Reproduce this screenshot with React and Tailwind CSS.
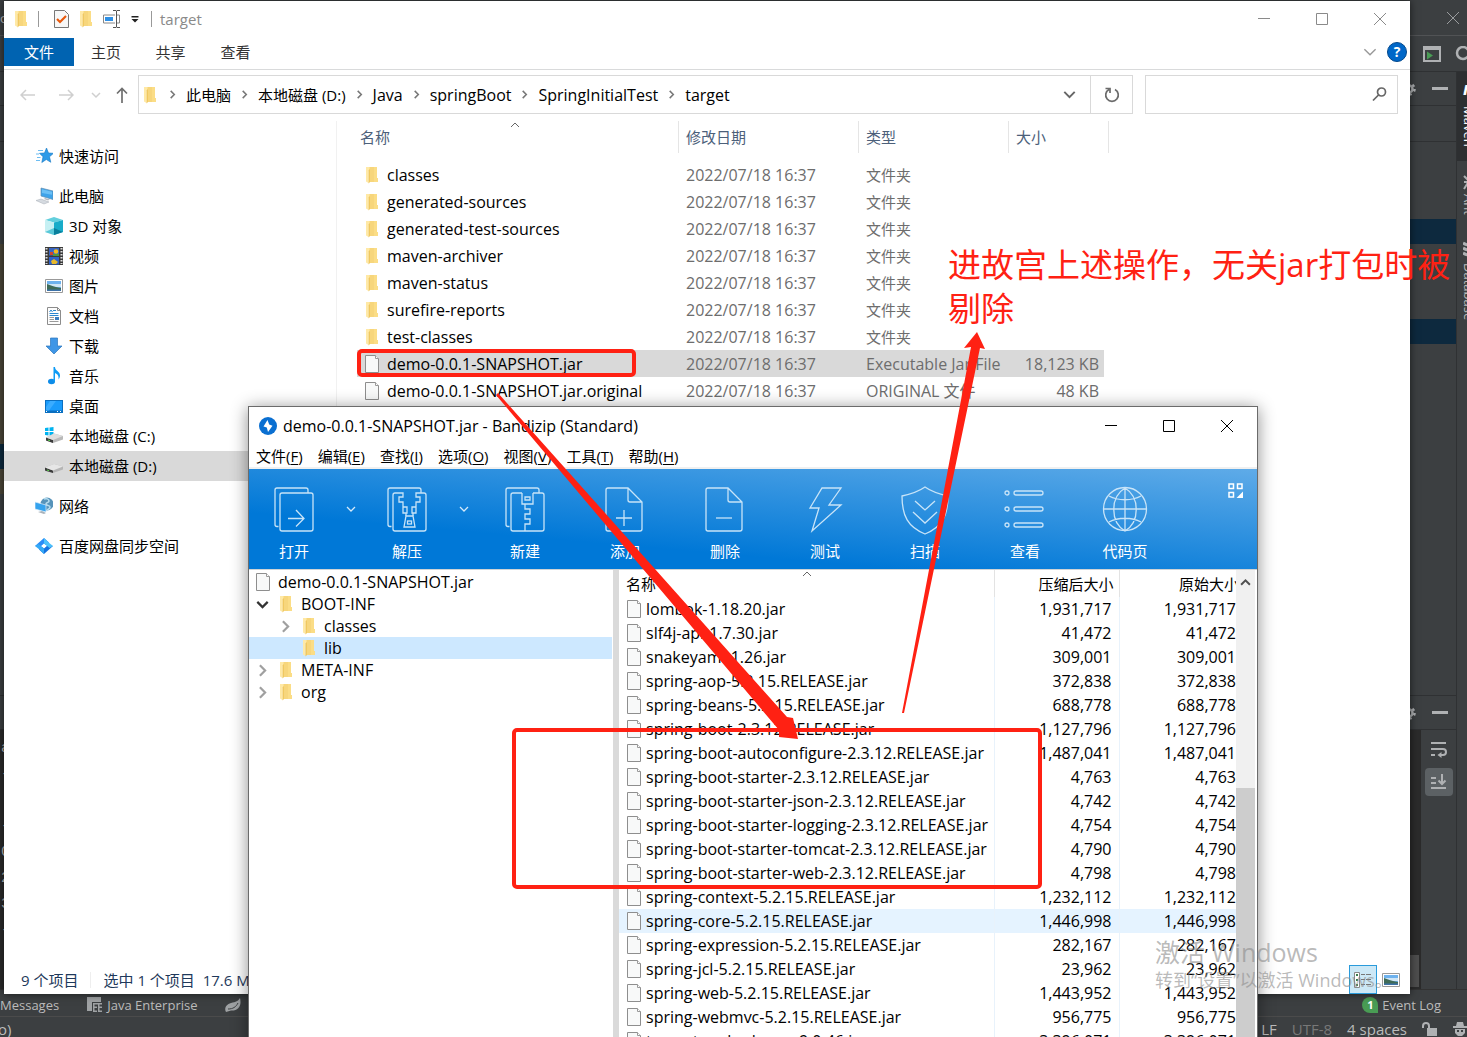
import { useState } from "react"

const places = [
    {name:'快速访问',icon:'star',level:0},
    {name:'此电脑',icon:'pc',level:0,gap:true},
    {name:'3D 对象',icon:'cube',level:1},
    {name:'视频',icon:'video',level:1},
    {name:'图片',icon:'picture',level:1},
    {name:'文档',icon:'doc',level:1},
    {name:'下载',icon:'download',level:1},
    {name:'音乐',icon:'music',level:1},
    {name:'桌面',icon:'desktop',level:1},
    {name:'本地磁盘 (C:)',icon:'diskc',level:1},
    {name:'本地磁盘 (D:)',icon:'disk',level:1},
    {name:'网络',icon:'network',level:0,gap:true},
    {name:'百度网盘同步空间',icon:'baidu',level:0,gap:true},
]

const crumbs = ['此电脑','本地磁盘 (D:)','Java','springBoot','SpringInitialTest','target']

const files = [
    {name:'classes',type:'文件夹'},
    {name:'generated-sources',type:'文件夹'},
    {name:'generated-test-sources',type:'文件夹'},
    {name:'maven-archiver',type:'文件夹'},
    {name:'maven-status',type:'文件夹'},
    {name:'surefire-reports',type:'文件夹'},
    {name:'test-classes',type:'文件夹'},
    {name:'demo-0.0.1-SNAPSHOT.jar',type:'Executable Jar File',size:'18,123 KB'},
    {name:'demo-0.0.1-SNAPSHOT.jar.original',type:'ORIGINAL 文件',size:'48 KB'},
]

const menus = [['文件','F'],['编辑','E'],['查找','I'],['选项','O'],['视图','V'],['工具','T'],['帮助','H']]

const tools = [
    {name:'打开',icon:'open',more:true},
    {name:'解压',icon:'extract',more:true},
    {name:'新建',icon:'create'},
    {name:'添加',icon:'add'},
    {name:'删除',icon:'remove'},
    {name:'测试',icon:'test'},
    {name:'扫描',icon:'scan'},
    {name:'查看',icon:'view'},
    {name:'代码页',icon:'globe'},
]

const jars = [
    ['lombok-1.18.20.jar','1,931,717'],
    ['slf4j-api-1.7.30.jar','41,472'],
    ['snakeyaml-1.26.jar','309,001'],
    ['spring-aop-5.2.15.RELEASE.jar','372,838'],
    ['spring-beans-5.2.15.RELEASE.jar','688,778'],
    ['spring-boot-2.3.12.RELEASE.jar','1,127,796'],
    ['spring-boot-autoconfigure-2.3.12.RELEASE.jar','1,487,041'],
    ['spring-boot-starter-2.3.12.RELEASE.jar','4,763'],
    ['spring-boot-starter-json-2.3.12.RELEASE.jar','4,742'],
    ['spring-boot-starter-logging-2.3.12.RELEASE.jar','4,754'],
    ['spring-boot-starter-tomcat-2.3.12.RELEASE.jar','4,790'],
    ['spring-boot-starter-web-2.3.12.RELEASE.jar','4,798'],
    ['spring-context-5.2.15.RELEASE.jar','1,232,112'],
    ['spring-core-5.2.15.RELEASE.jar','1,446,998'],
    ['spring-expression-5.2.15.RELEASE.jar','282,167'],
    ['spring-jcl-5.2.15.RELEASE.jar','23,962'],
    ['spring-web-5.2.15.RELEASE.jar','1,443,952'],
    ['spring-webmvc-5.2.15.RELEASE.jar','956,775'],
    ['tomcat-embed-core-9.0.46.jar','3,396,071'],
]

function Folder(){
    return(
        <svg width="14" height="18" viewBox="0 0 14 18" className="shrink-0">
            <path d="M4 1h8v11h1v4H4z" fill="#f7d67c"/>
            <path d="M9 1h3v11h1v4H9z" fill="#fbdd86"/>
            <path d="M1 1h3.5v2.5l-1 1V17L1 15.500z" fill="#ffe9a6"/>
            <path d="M3.500 4.500L5 3v13l-1.500 1.500z" fill="#f0c860"/>
        </svg>
    )
}

function Paper(){
    return(
        <svg width="14" height="18" viewBox="0 0 14 18" className="shrink-0">
            <path d="M.5.5h10l3 3v14H.5z" fill="#f8f9f9" stroke="#8e8e8e"/>
            <path d="M10.500.5v3h3" fill="#fff" stroke="#9a9a9a"/>
        </svg>
    )
}

function Chevron({dir='down',size=10,width=1.500}){
    const paths = {
        down:'M1 3l4 4 4-4',
        up:'M1 7l4-4 4 4',
        right:'M3 1l4 4-4 4',
    }
    return(
        <svg width={size} height={size} viewBox="0 0 10 10" fill="none" stroke="currentColor" strokeWidth={width} className="shrink-0">
            <path d={paths[dir]}/>
        </svg>
    )
}

function PlaceIcon({name}){
    const shapes = {
        star:<>
            <path d="M11.500 1l2 5 5 .3-4 3.500 1.300 5.500-4.500-2.800-4.500 3 1.200-5.700-3.500-3.500 5-.3z" fill="#2e9be8" stroke="#1577c2" strokeWidth=".6"/>
            <path d="M3 3.500h5M1 7h3M2 10.500h3.500M1 13.500h4" stroke="#6dbdf2" strokeWidth="1"/>
        </>,
        pc:<>
            <path d="M6 1l12 3v8.500L6 9z" fill="#3ea3ea" stroke="#5f8db0" strokeWidth=".7"/>
            <path d="M7 2.300l10 2.500v3L7 6z" fill="#6cc0f5"/>
            <path d="M1 13.500l5-1.500 8 3-5 2z" fill="#d5dae0" stroke="#a7adb5" strokeWidth=".5"/>
            <path d="M10 11l5 1.500-2 1-4-1.500z" fill="#b2b8c0"/>
        </>,
        cube:<>
            <path d="M0 3l9-3 9 3-9 2.500z" fill="#63cfdd"/>
            <path d="M0 3l9 2.500V18l-9-3z" fill="#c6f0f3"/>
            <path d="M9 5.500L18 3v12l-9 3z" fill="#18acc9"/>
            <path d="M0 15l9-4v7z" fill="#5ac8d8"/>
            <path d="M9 11l9 4-9 3z" fill="#0a7f9c"/>
        </>,
        video:<>
            <path d="M0 0h18v18H0z" fill="#3a3a3a"/>
            <path d="M1.500 1v16M16.500 1v16" stroke="#ddd" strokeWidth="2" strokeDasharray="1.500 1.500"/>
            <path d="M4 1h10v7.500H4z" fill="#3a66c4"/>
            <path d="M4 10h10v7.500H4z" fill="#2f62c9"/>
            <path d="M5 5h3v3H5z" fill="#d2452c"/>
            <circle cx="11" cy="4.500" r="2.300" fill="#f2b91d"/>
            <path d="M8 7h6v2H8z" fill="#4d9b3d"/>
            <path d="M6 14l3-2 4 3-2 2H7z" fill="#e7b92c"/>
        </>,
        picture:<>
            <path d="M.5 2.500h17v13H.5z" fill="#fff" stroke="#999"/>
            <path d="M2 4h14v10H2z" fill="#6eb2ee"/>
            <path d="M2 7h14v3H2z" fill="#cfe6f7"/>
            <path d="M2 7c4 1 6 3 14 4v3H2z" fill="#3f6b58"/>
            <path d="M2 12.500h14V14H2z" fill="#3d72a8"/>
        </>,
        doc:<>
            <path d="M2.500.5h10l3 3v14h-13z" fill="#fdfdfd" stroke="#8c8c8c"/>
            <path d="M12.500.5v3h3" fill="none" stroke="#8c8c8c"/>
            <path d="M4.500 5l1.500-2 1.500 2M8 3.500h3M4.500 6.500h9M4.500 8.500h9" stroke="#2b86d0" fill="none"/>
            <path d="M4.500 10.500H9M4.500 12.500H9M4.500 14.500h9" stroke="#9a9a9a"/>
            <path d="M10 10h4v3h-4z" fill="#3a7cc0"/>
        </>,
        download:<path d="M5.500 1h7v8H17l-8 8-8-8h4.500z" fill="#3f96e6" stroke="#2a76bd" strokeWidth=".7"/>,
        music:<>
            <ellipse cx="6.500" cy="14.500" rx="3.500" ry="2.800" fill="#0e8ce8"/>
            <path d="M8.500 0H10c0 4 5 4 5 8.500 0 1.500-.5 2.500-1.500 4 .5-4-1-5.500-3.500-6.500v8.500H8.500z" fill="#0e9bf5"/>
        </>,
        desktop:<>
            <path d="M0 3h18v13H0z" fill="#0b6fc0"/>
            <path d="M1 4h16v9.500H1z" fill="#1a9bfb"/>
            <path d="M5 4h6L4 13.500H1V10z" fill="#3aacff"/>
            <path d="M1 14.500h1M12 14.500h1M15 14.500h1" stroke="#fff"/>
        </>,
        diskc:<>
            <path d="M0 1l3.500-.5v3.500H0zM4.500.5L8.500 0v4h-4zM0 5h3.500v3.500L0 8zM4.500 5h4v4l-4-.5z" fill="#00b3f0"/>
            <path d="M1 10.500l8-4 9 2.500v3.500L8 16l-7-2.500z" fill="#b9b9b9"/>
            <path d="M1 10.500l7 2.500v3l-7-2.500z" fill="#3c3c3c"/>
            <path d="M4 9l5-2.500 9 2.500-10 4-7-2.500z" fill="#dedede"/>
            <path d="M3 13l2 .7" stroke="#59d04c"/>
        </>,
        disk:<>
            <path d="M0 10.500l9-3.500 9 2.500v3L8 16l-8-2z" fill="#b5b5b5"/>
            <path d="M0 10.500l8 3v2.500l-8-2.500z" fill="#3c3c3c"/>
            <path d="M0 10.500L9 7l9 2.500-10 4z" fill="#e6e6e6"/>
            <path d="M2 13l2 .7" stroke="#59d04c"/>
        </>,
        network:<>
            <circle cx="12" cy="7" r="6.500" fill="#5693ba"/>
            <path d="M9 2c2-1 5 0 5 2s-3 1-3 3 4 1 4 3-2 2-3 3" stroke="#b6dcee" strokeWidth="1.600" fill="none"/>
            <path d="M0 5l11 3v7L0 12z" fill="#35a3ee" stroke="#dfeefa" strokeWidth=".7"/>
            <path d="M3 15l6 2 2-1-4-2z" fill="#a8b2ba"/>
        </>,
        baidu:<>
            <path d="M9 1l5 4.500-2.500 3L9 6.500 5 10 0 9z" fill="#2b8cf7"/>
            <path d="M9 17l-5-4.500 2.500-3L9 11.500 13 8l5 1z" fill="#1573e0"/>
            <path d="M9 1l4 4 5 4-3.500 2L9 6.500z" fill="#4cc1fb"/>
            <path d="M9 17l-4-4L0 9l3.500-2L9 11.500z" fill="#35a9f6"/>
        </>,
    }
    return <svg width="18" height="18" viewBox="0 0 18 18" fill="none" className="shrink-0">{shapes[name]}</svg>
}

function ToolIcon({name}){
    const back = <path d="M6.500 39.500H5a2 2 0 0 1-2-2V3a2 2 0 0 1 2-2h29a2 2 0 0 1 2 2v3"/>
    const page = <path d="M5 1h20l14 14v27a2 2 0 0 1-2 2H5a2 2 0 0 1-2-2V3a2 2 0 0 1 2-2zM25 1v12a2 2 0 0 0 2 2h12"/>
    const shapes = {
        open:<>
            {back}
            <rect x="8" y="6" width="33" height="38" rx="2"/>
            <path d="M16 31.500h16M24 23l8 8.500-8 8"/>
        </>,
        extract:<>
            {back}
            <path d="M14 6h-4a2 2 0 0 0-2 2v34a2 2 0 0 0 2 2h29a2 2 0 0 0 2-2V8a2 2 0 0 0-2-2h-4"/>
            <path d="M14 6h4v4h-4v5h4v5h4v6h-4M35 6h-4v4h4v5h-4v5h-4v6h4M18 20v6h3v3M31 20v6h-3v3"/>
            <path d="M21 29h7l2 11H19z"/><rect x="22.500" y="34" width="4" height="3"/>
        </>,
        create:<>
            {back}
            <path d="M19 6h-9a2 2 0 0 0-2 2v34a2 2 0 0 0 2 2h29a2 2 0 0 0 2-2V8a2 2 0 0 0-2-2h-9"/>
            <path d="M19 6v11h11V6M22 10h5v3h-5zM22 17v5h5v5h-5v5h5v5h-5v7M27 22h-5M27 32h-5"/>
        </>,
        add:<>{page}<path d="M13 31h16M21 23v16"/></>,
        remove:<>{page}<path d="M13 31h16"/></>,
        test:<path d="M19 1h19L26 18h12L9 44l7-23H7z"/>,
        scan:<>
            <path d="M22 0c7 5 14 7 23 9 0 20-6 31-23 38C5 40-1 29-1 9c9-2 16-4 23-9z"/>
            <path d="M12 14l10 9 10-9M10 25l12 11 12-11"/>
        </>,
        view:<>
            <circle cx="4" cy="6" r="2"/><circle cx="4" cy="22" r="2"/><circle cx="4" cy="38" r="2"/>
            <rect x="11" y="4" width="29" height="4" rx="2"/><rect x="11" y="20" width="29" height="4" rx="2"/><rect x="11" y="36" width="29" height="4" rx="2"/>
        </>,
        globe:<>
            <circle cx="22" cy="22" r="21.500"/>
            <path d="M22 1v43M1 22h42M6 9c9 5 23 5 32 0M6 35c9-5 23-5 32 0M22 1c-15 9-15 34 0 43M22 1c15 9 15 34 0 43"/>
        </>,
    }
    return <svg width="48" height="48" viewBox="-2 -1 48 48" fill="none" stroke="#c8e4f8" strokeWidth="1.300" className="overflow-visible">{shapes[name]}</svg>
}

function WindowButtons(){
    return(
        <div className="flex h-full pr-px">
            <button aria-label="最小化" className="w-[58px] flex items-center justify-center">
                <svg width="12" height="12" stroke="currentColor"><path d="M0 5.500h12"/></svg>
            </button>
            <button aria-label="最大化" className="w-[58px] flex items-center justify-center">
                <svg width="12" height="12" stroke="currentColor" fill="none"><path d="M.5.5h11v11H.5z"/></svg>
            </button>
            <button aria-label="关闭" className="w-[58px] flex items-center justify-center">
                <svg width="12" height="12" stroke="currentColor"><path d="M0 0l12 12M12 0L0 12"/></svg>
            </button>
        </div>
    )
}

function Gear(){
    return(
        <svg width="14" height="14" viewBox="0 0 14 14" fill="none" stroke="#afb1b3">
            <circle cx="7" cy="7" r="3.500" strokeWidth="2.500"/>
            <circle cx="7" cy="7" r="5.500" strokeWidth="2.500" strokeDasharray="2.500 3.260"/>
        </svg>
    )
}

function PanelHeader(){
    return(
        <div className="h-[34px] shrink-0 border-b border-[#2f3133] flex items-center justify-end gap-4 pr-2">
            <Gear/>
            <span className="w-4 h-[3px] bg-[#afb1b3]"></span>
        </div>
    )
}

function Ide(){
    return(
        <div className="h-full flex flex-col bg-[#3c3f41] text-[#bbbbbb] text-[13px] leading-5 whitespace-nowrap">
            <div className="h-9 shrink-0 border-b border-[#515355] flex items-center justify-between pr-2">
                <span>o</span>
                <svg width="12" height="12" stroke="#9a9c9e"><path d="M0 0l12 12M12 0L0 12"/></svg>
            </div>
            <div className="h-9 shrink-0 border-b border-[#2f3133] flex items-center justify-end gap-[14px] overflow-hidden">
                <svg width="18" height="16" viewBox="0 0 18 16" className="shrink-0"><path d="M1 1h16v14H1z" fill="none" stroke="#afb1b3" strokeWidth="2"/><path d="M0 0h18v4H0z" fill="#afb1b3"/><path d="M4 5.500l6 4-6 4z" fill="#499c54"/></svg>
                <svg width="12" height="16" viewBox="0 0 12 16" className="shrink-0" fill="none" stroke="#afb1b3" strokeWidth="2.500"><circle cx="8" cy="7" r="6"/></svg>
            </div>
            <div className="flex-1 min-h-0 flex">
                <div className="flex-1 min-w-0 flex flex-col">
                    <PanelHeader/>
                    <div className="h-9 shrink-0 border-b border-[#2f3133]"></div>
                    <div className="flex-1 flex">
                        <div className="w-1 pt-[102px] flex flex-col bg-[#3c3f41]">
                            <div className="h-[200px] bg-[#4b4638]"></div>
                            <div className="h-[25px] bg-[#0d293e]"></div>
                            <div className="h-[25px] bg-[#4b4638]"></div>
                        </div>
                        <div className="flex-1 pt-[77px]">
                            <div className="h-[25px] bg-[#0d293e]"></div>
                            <div className="h-[25px] mt-[75px] bg-[#0d293e]"></div>
                        </div>
                    </div>
                    <div className="border-t border-[#2f3133]"><PanelHeader/></div>
                    <div className="h-[259px] shrink-0 flex bg-[#2b2b2b]">
                        <pre className="flex-1 pt-1.5 pl-px text-[15px] leading-[26px] overflow-hidden">{'a\n-\n\n-\n0\n2\n3\n-'}</pre>
                        <div className="w-[13px] flex items-end pb-0.5 pr-0.5"><div className="h-8 w-full bg-[#4e4e4e]"></div></div>
                        <div className="w-[35px] bg-[#3c3f41] flex flex-col items-center pt-1.5">
                            <button aria-label="Soft-Wrap" className="size-7 flex items-center justify-center">
                                <svg width="18" height="18" viewBox="0 0 18 18" fill="none" stroke="#afb1b3" strokeWidth="2"><path d="M1 2h15M1 8h12a3 3 0 0 1 0 6h-3M1 14h4"/><path d="M11.500 11v6L7.500 14z" fill="#afb1b3" stroke="none"/></svg>
                            </button>
                            <button aria-label="Scroll to End" className="size-7 mt-1 rounded bg-[#5c6164] flex items-center justify-center">
                                <svg width="18" height="18" viewBox="0 0 18 18" fill="none" stroke="#afb1b3" strokeWidth="2"><path d="M1 5h5M1 10h5M1 15h15M12 1v10M8.500 7.500L12 11l3.500-3.500"/></svg>
                            </button>
                        </div>
                    </div>
                </div>
                <div className="w-[11px] shrink-0 border-l border-[#2f3133] overflow-hidden flex flex-col">
                    <button className="h-[89px] w-5 shrink-0 bg-[#2d2f31] text-white pl-1 pt-[34px] [writing-mode:vertical-rl] leading-4 text-left relative">
                        <span className="absolute left-1.5 top-2 [writing-mode:horizontal-tb] italic font-bold text-[18px]">m</span>Maven
                    </button>
                    <button className="h-[84px] w-5 shrink-0 pl-1 pt-[33px] [writing-mode:vertical-rl] leading-4 text-left relative">
                        <svg className="absolute left-1.5 top-3.5" width="14" height="16" fill="none" stroke="#afb1b3" strokeWidth="2"><path d="M1 1l5 5M6 6l-5 8M1 7h5"/></svg>Ant
                    </button>
                    <button className="h-24 w-5 shrink-0 pl-1 pt-[18px] [writing-mode:vertical-rl] leading-4 text-left relative">
                        <svg className="absolute left-1.5 -top-1" width="14" height="16" fill="none" stroke="#afb1b3" strokeWidth="3"><path d="M0 2q6 4 14 0M0 7q6 4 14 0M0 12q6 4 14 0"/></svg>Database
                    </button>
                </div>
            </div>
            <div className="h-[27px] pt-1 shrink-0 border-t border-[#323232] flex items-center">
                <span>Messages</span>
                <svg width="16" height="16" viewBox="0 0 16 16" className="ml-7 mr-1" fill="#9fa2a4"><path d="M0 0h14v5H5v9H0z"/><path d="M6 6h9v1.500H7.500v2H10V11H7.500v2.500H10V15H6zM11 6h4v1.500h-2.500v2H15V11h-2.500v2.500H15V15h-4z"/></svg>
                <span>Java Enterprise</span>
                <svg width="16" height="14" viewBox="0 0 16 14" className="ml-7" fill="#9fa2a4"><path d="M15 0c2 8-2 13-9 12.500L1 14c-2-3 0-8 5-9s7-2 9-5z"/><path d="M3 11c5 0 8-2 10-6" fill="none" stroke="#3c3f41"/></svg>
                <span className="ml-auto mr-1 size-4 rounded-full rounded-br-none bg-[#499c54] text-white text-[11px] leading-4 font-bold text-center">1</span>
                <span className="pr-[26px]">Event Log</span>
            </div>
            <div className="h-[21px] pt-1 shrink-0 border-t border-[#4b4b4b] flex items-center text-[15px]">
                <span className="-ml-0.5">o)</span>
                <span className="ml-auto">LF</span>
                <span className="ml-[15px] text-[#787878]">UTF-8</span>
                <span className="ml-[15px]">4 spaces</span>
                <svg width="15" height="14" viewBox="0 0 15 14" className="ml-[15px]" fill="none" stroke="#afb1b3" strokeWidth="2"><path d="M1 6V4a3 3 0 0 1 6 0v2"/><path d="M5 6h10v8H5z" fill="#afb1b3" stroke="none"/></svg>
                <svg width="14" height="16" viewBox="0 0 14 16" className="ml-4" fill="#afb1b3"><path d="M3 5l1-4h6l1 4h3v2H0V5zM2 8h10v4l-3 3H5l-3-3z"/><path d="M4 9h2v2H4zM8 9h2v2H8z" fill="#3c3f41"/></svg>
            </div>
        </div>
    )
}

function Explorer(){
    const [selected,setselected] = useState(7)
    return(
        <section className="absolute left-1 right-[57px] top-px bottom-[43px] bg-white text-[15px] leading-5 text-black flex flex-col shadow-[0_0_8px_rgba(0,0,0,0.6)] whitespace-nowrap overflow-hidden">
            <header className="h-9 shrink-0 flex items-center justify-between text-[#8a8a8a]">
                <div className="flex items-center pl-2.5">
                    <Folder/>
                    <span className="w-px h-4 bg-[#999] ml-2.5 mr-[15px]"></span>
                    <svg width="15" height="18" viewBox="0 0 15 18"><path d="M.5.5h10l4 4v13H.5z" fill="#f7f7f7" stroke="#777"/><path d="M3 9l3 3 6-6" fill="none" stroke="#e8590c" strokeWidth="2.200"/></svg>
                    <span className="ml-2.5 mr-2.5"><Folder/></span>
                    <svg width="18" height="18" viewBox="0 0 18 18" fill="none"><path d="M12 5H.5v8H12M14 5h2.500v8H14" stroke="#888"/><path d="M2 7h8v4H2z" fill="#2d8fe5"/><path d="M10 .5h3l.5 1 .5-1h3M10 17.500h3l.5-1 .5 1h3M13.500 1v16" stroke="#555"/></svg>
                    <svg width="8" height="7" viewBox="0 0 8 7" className="ml-2.5"><path d="M.5 0h7v1.500h-7zM.5 3h7L4 6.500z" fill="#222"/></svg>
                    <span className="w-px h-4 bg-[#999] ml-3 mr-2"></span>
                    <h1>target</h1>
                </div>
                <WindowButtons/>
            </header>
            <nav className="h-[33px] pt-px shrink-0 border-b border-[#d9dadb] flex items-start text-[#333]">
                <button className="w-[70px] h-7 bg-[#0063b1] text-white">文件</button>
                <button className="w-16 h-7">主页</button>
                <button className="w-[65px] h-7">共享</button>
                <button className="w-[65px] h-7">查看</button>
                <div className="ml-auto h-7 mr-[3px] flex items-center gap-2.5 text-[#999]">
                    <button aria-label="展开功能区"><Chevron size={14} width={1}/></button>
                    <button aria-label="帮助" className="size-5 rounded-full bg-[#0067c8] border border-[#02488c] text-white font-bold text-[14px] leading-4">?</button>
                </div>
            </nav>
            <div className="h-[51px] shrink-0 pt-[5px] flex items-start">
                <div className="w-[134px] h-10 flex items-center text-[#cfcfcf] pl-4">
                    <button aria-label="后退"><svg width="15" height="12" fill="none" stroke="currentColor" strokeWidth="1.500"><path d="M15 6H1M6 1L1 6l5 5"/></svg></button>
                    <button aria-label="前进" className="ml-6"><svg width="15" height="12" fill="none" stroke="currentColor" strokeWidth="1.500"><path d="M0 6h14M9 1l5 5-5 5"/></svg></button>
                    <button aria-label="最近浏览" className="ml-[17px]"><Chevron/></button>
                    <button aria-label="上移" className="ml-[15px] text-[#6f6f6f]"><svg width="12" height="16" fill="none" stroke="currentColor" strokeWidth="1.700"><path d="M6 16V1M1 6.500l5-5 5 5"/></svg></button>
                </div>
                <div className="flex-1 h-[39px] border border-[#d9d9d9] flex items-center">
                    <span className="ml-1 mr-[11px]"><Folder/></span>
                    {
                        crumbs.map((item,index)=>(
                            <span key={index} className="flex items-center">
                                <span className="text-[#777] mr-[9px]"><Chevron dir="right" size={9} width={1.700}/></span>
                                <a href="#" className={item.match(/^[A-Za-z]/)?'text-[16px] mr-[9px]':'mr-[9px]'}>{item}</a>
                            </span>
                        ))
                    }
                    <button aria-label="以前的位置" className="ml-auto mr-[14px] text-[#666]"><Chevron size={13} width={1.500}/></button>
                    <button aria-label="刷新" className="w-[42px] h-full border-l border-[#d9d9d9] flex items-center justify-center">
                        <svg width="16" height="16" viewBox="0 0 16 16" fill="none" stroke="#6b6b6b" strokeWidth="1.700"><path d="M11 2.500a6.300 6.300 0 1 1-6 0M1.500 1.500H6V6"/></svg>
                    </button>
                </div>
                <label className="w-[253px] h-[39px] ml-3 mr-3 border border-[#d9d9d9] flex items-center pr-2.5">
                    <input aria-label="搜索" className="flex-1 min-w-0 h-full px-2 outline-none"/>
                    <svg width="15" height="15" viewBox="0 0 15 15" fill="none" stroke="#666" strokeWidth="1.700"><circle cx="9.500" cy="5" r="4"/><path d="M6.500 8L1 13.500"/></svg>
                </label>
            </div>
            <div className="flex-1 min-h-0 flex">
                <aside className="w-[333px] shrink-0 pt-5 border-r border-[#f1f1f1]">
                    <ul>
                        {
                            places.map((item,index)=>(
                                <li key={index} className={item.gap?'mt-2.5':''}>
                                    <a href="#" className={(item.level?'pl-[41px] gap-1.5 ':'pl-[31px] gap-1.5 ')+(item.icon==='disk'?'bg-[#d9d9d9] ':'')+'h-[30px] flex items-center'}>
                                        <PlaceIcon name={item.icon}/>
                                        {item.name}
                                    </a>
                                </li>
                            ))
                        }
                    </ul>
                </aside>
                <div className="flex-1 min-w-0 pl-5">
                    <table className="w-[752px] table-fixed border-separate border-spacing-0 text-left">
                        <colgroup>
                            <col/>
                            <col className="w-[180px]"/>
                            <col className="w-[150px]"/>
                            <col className="w-[100px]"/>
                        </colgroup>
                        <thead className="text-[#4c607a]">
                            <tr className="h-8">
                                <th className="font-normal pl-[3px] border-r border-[#e5e5e5] relative">名称<span className="absolute left-[153px] -top-px text-[#666]"><Chevron dir="up" width={1}/></span></th>
                                <th className="font-normal pl-[7px] border-r border-[#e5e5e5]">修改日期</th>
                                <th className="font-normal pl-[7px] border-r border-[#e5e5e5]">类型</th>
                                <th className="font-normal pl-[7px] border-r border-[#e5e5e5]">大小</th>
                            </tr>
                        </thead>
                        <tbody className="text-[#6d6d6d] before:block before:h-2">
                            {
                                files.map((item,index)=>(
                                    <tr key={index} onClick={()=>setselected(index)} className="h-[27px]">
                                        <td className={(index===selected?'bg-[#d9d9d9] ':'')+'pl-2 text-black text-[16px]'}>
                                            <span className="flex items-center"><span className="w-[22px]">{item.size?<Paper/>:<Folder/>}</span>{item.name}</span>
                                        </td>
                                        <td className={(index===selected?'bg-[#d9d9d9] ':'')+'pl-[7px] text-[16px]'}>2022/07/18 16:37</td>
                                        <td className={(index===selected?'bg-[#d9d9d9] ':'')+(item.size?'text-[16px] ':'')+'pl-[7px]'}>{item.type}</td>
                                        <td className={(index===selected?'bg-[#d9d9d9] ':'')+'pr-[5px] border-r-[5px] border-white bg-clip-padding text-right text-[16px]'}>{item.size}</td>
                                    </tr>
                                ))
                            }
                        </tbody>
                    </table>
                </div>
            </div>
            <footer className="h-[29px] shrink-0 flex items-center pl-[17px] text-[#1e395b]">
                <span>9 个项目</span>
                <span className="w-px h-4 bg-[#eee] mx-3"></span>
                <span>选中 1 个项目&nbsp; 17.6 MB</span>
                <button aria-label="详细信息" className="ml-auto w-7 h-full border border-[#2a9bdb] bg-[#cce8f6] flex items-center justify-center">
                    <svg width="18" height="16" viewBox="0 0 18 16" fill="none"><path d="M.5.5h5v15h-5z" stroke="#888" fill="#fff"/><path d="M2 3h2M2 8h2M2 13h2" stroke="#3b7d4c" strokeWidth="2"/><path d="M7 2.500h4M12 2.500h5M7 7.500h4M12 7.500h5M7 12.500h4M12 12.500h5" stroke="#777"/></svg>
                </button>
                <button aria-label="大缩略图" className="ml-[5px] mr-2.5"><PlaceIcon name="picture"/></button>
            </footer>
        </section>
    )
}

function TreeRow({name,depth,arrow,active}){
    return(
        <li>
            <button className={(depth===2?'pl-[30px] ':'pl-[7px] ')+(active?'bg-[#cde8ff] ':'')+'w-full h-[22px] flex items-center text-left'}>
                <span className={'w-[23px] flex '+(arrow==='down'?'text-[#333]':'text-[#a0a0a0]')}>
                    {arrow && <Chevron dir={arrow} size={13} width={1.700}/>}
                </span>
                <span className="w-[22px]"><Folder/></span>
                {name}
            </button>
        </li>
    )
}

function Bandizip(){
    return(
        <section className="absolute left-[248px] right-[209px] top-[406px] -bottom-4 bg-white border border-[#6b6b6b] shadow-[0_2px_16px_rgba(0,0,0,0.45)] text-[15px] leading-5 text-black flex flex-col whitespace-nowrap overflow-hidden">
            <header className="h-[37px] shrink-0 flex items-center justify-between">
                <div className="flex items-center pl-2.5 gap-1.5">
                    <svg width="18" height="18" viewBox="0 0 18 18"><circle cx="9" cy="9" r="9" fill="#0a6fd1"/><path d="M8.500 3L4.500 9.500l3.300 1L9 15l4.500-6.300-3.300-1.200z" fill="#fff"/></svg>
                    <h2 className="text-[16px]">demo-0.0.1-SNAPSHOT.jar - Bandizip (Standard)</h2>
                </div>
                <WindowButtons/>
            </header>
            <nav className="h-[25px] shrink-0 border-b-2 border-[#f0f0f0] flex items-center gap-[15px] pl-[7px]">
                {
                    menus.map(([name,key])=>(
                        <button key={key}>{name}(<span className="underline underline-offset-2">{key}</span>)</button>
                    ))
                }
            </nav>
            <div className="h-[101px] shrink-0 border-b border-[#cfd3d6] bg-[linear-gradient(185deg,#5fabe8_0%,#0078d7_70%)] text-white flex items-start">
                {
                    tools.map((item,index)=>(
                        <div key={index} className="flex h-full">
                            <button className={(item.more?'w-[90px] ':'w-[100px] ')+'pt-[17px] flex flex-col items-center'}>
                                <ToolIcon name={item.icon}/>
                                <span className="mt-[7px]">{item.name}</span>
                            </button>
                            {item.more && <button aria-label={item.name+'菜单'} className="w-[23px] h-20 flex items-center justify-center text-[#d5eafa]"><Chevron width={1.300}/></button>}
                        </div>
                    ))
                }
                <button aria-label="布局" className="ml-auto mr-3.5 mt-3.5">
                    <svg width="15" height="15" fill="none" stroke="#fff" strokeWidth="1.500"><path d="M1 1h4.500v4.500H1zM9.500 1H14v4.500H9.500zM1 9.500h4.500V14H1z"/><path d="M15 8.500V15H8.500z" fill="#fff" stroke="none"/></svg>
                </button>
            </div>
            <div className="flex-1 min-h-0 flex text-[16px]">
                <ul className="w-[363px] shrink-0 pt-px">
                    <li><button className="w-full h-[22px] flex items-center gap-2 pl-[7px]"><Paper/>demo-0.0.1-SNAPSHOT.jar</button></li>
                    <TreeRow name="BOOT-INF" depth={1} arrow="down"/>
                    <TreeRow name="classes" depth={2} arrow="right"/>
                    <TreeRow name="lib" depth={2} active/>
                    <TreeRow name="META-INF" depth={1} arrow="right"/>
                    <TreeRow name="org" depth={1} arrow="right"/>
                </ul>
                <div className="w-[7px] shrink-0 bg-[#dadada] border-l border-white"></div>
                <div className="flex-1 min-w-0 overflow-hidden">
                    <table className="w-[calc(100%+8px)] table-fixed text-right">
                        <colgroup>
                            <col/>
                            <col className="w-[125px]"/>
                            <col className="w-[125px]"/>
                        </colgroup>
                        <thead className="text-[15px]">
                            <tr className="h-[27px]">
                                <th className="font-normal text-left pl-[7px] border-r border-[#e3e3e3] relative">名称<span className="absolute left-[183px] -top-px text-[#666]"><Chevron dir="up" width={1}/></span></th>
                                <th className="font-normal pr-[5px] border-r border-[#e3e3e3]">压缩后大小</th>
                                <th className="font-normal pr-[5px]">原始大小</th>
                            </tr>
                        </thead>
                        <tbody>
                            {
                                jars.map(([name,size])=>(
                                    <tr key={name} className={name.startsWith('spring-core')?'h-6 bg-[#e5f3ff]':'h-6'}>
                                        <td className="pl-2 border-r border-[#e8f2fb]"><span className="flex items-center gap-[5px]"><Paper/>{name}</span></td>
                                        <td className="pr-[7px] border-r border-[#e8f2fb]">{size}</td>
                                        <td className="pr-2">{size}</td>
                                    </tr>
                                ))
                            }
                        </tbody>
                    </table>
                </div>
                <div className="w-[19px] mr-0.5 shrink-0 bg-[#f0f0f0] flex flex-col">
                    <button aria-label="向上滚动" className="h-6 flex items-center justify-center text-[#505050]"><Chevron dir="up" size={11} width={1.800}/></button>
                    <div className="mt-[194px] flex-1 bg-[#cdcdcd]"></div>
                </div>
            </div>
        </section>
    )
}

function Marks(){
    return(
        <div className="absolute inset-0 pointer-events-none overflow-hidden">
            <svg width="1467" height="1037" viewBox="0 0 1467 1037" fill="none" className="absolute left-0 top-0">
                <rect x="359" y="351" width="275" height="24" rx="3" stroke="#ff2113" strokeWidth="4"/>
                <rect x="514" y="730" width="526" height="157" rx="3" stroke="#ff2113" strokeWidth="4"/>
                <path d="M498 393L787 717l6 1 5 21-19-2 0-7L496 395z" fill="#ff2113"/>
                <path d="M902 713L971 347l-7 1 13-16 8 17-5-1L904 713z" fill="#ff2113"/>
            </svg>
            <p className="absolute left-[948px] top-[243px] w-[510px] text-[33px] leading-[44px] text-[#ff2113]">进故宫上述操作，无关jar打包时被剔除</p>
            <div className="absolute left-[1155px] top-[936px] text-[#8c8c8c]/60 whitespace-nowrap">
                <p className="text-[25px] leading-8">激活 Windows</p>
                <p className="text-[18px] leading-6">转到“设置”以激活 Windows。</p>
            </div>
        </div>
    )
}

export default function App(){
    return(
        <main className="relative h-screen w-full overflow-hidden font-['Open_Sans','Noto_Sans_CJK_SC',sans-serif]">
            <Ide/>
            <Explorer/>
            <Bandizip/>
            <Marks/>
        </main>
    )
}
